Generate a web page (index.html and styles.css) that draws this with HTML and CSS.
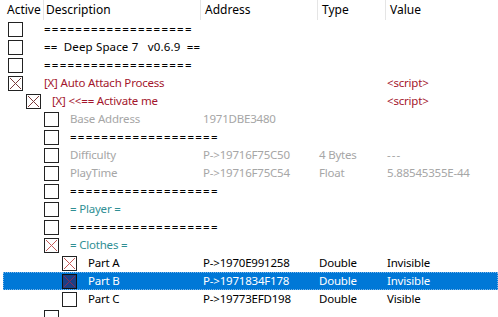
FILE: index.html
```html
<!DOCTYPE html>
<html lang="en">
<head>
    <meta charset="UTF-8">
    <title>Cheat Table</title>
    <link rel="stylesheet" href="styles.css">
</head>
<body>
    <div class="table">
        <div class="header">
            <div class="h-active">Active</div>
            <div class="h-desc">Description</div>
            <div class="h-addr">Address</div>
            <div class="h-type">Type</div>
            <div class="h-value">Value</div>
        </div>

        <div class="row">
            <div class="tree lv1"><span class="cb"></span><span class="desc eq">===================</span></div>
            <div class="addr"></div><div class="type"></div><div class="value"></div>
        </div>
        <div class="row">
            <div class="tree lv1"><span class="cb"></span><span class="desc title">==&nbsp; Deep Space 7&nbsp;&nbsp; v0.6.9&nbsp; ==</span></div>
            <div class="addr"></div><div class="type"></div><div class="value"></div>
        </div>
        <div class="row">
            <div class="tree lv1"><span class="cb"></span><span class="desc eq">===================</span></div>
            <div class="addr"></div><div class="type"></div><div class="value"></div>
        </div>
        <div class="row red">
            <div class="tree lv1"><span class="cb checked"><svg viewBox="0 0 15 15"><path d="M2 2L13 13M13 2L2 13"/></svg></span><span class="desc">[X] Auto Attach Process</span></div>
            <div class="addr"></div><div class="type"></div><div class="value">&lt;script&gt;</div>
        </div>
        <div class="row red">
            <div class="tree lv2"><span class="cb checked"><svg viewBox="0 0 15 15"><path d="M2 2L13 13M13 2L2 13"/></svg></span><span class="desc">[X] &lt;&lt;== Activate me</span></div>
            <div class="addr"></div><div class="type"></div><div class="value">&lt;script&gt;</div>
        </div>
        <div class="row grey">
            <div class="tree lv3"><span class="cb"></span><span class="desc">Base Address</span></div>
            <div class="addr">1971DBE3480</div><div class="type"></div><div class="value"></div>
        </div>
        <div class="row">
            <div class="tree lv3"><span class="cb"></span><span class="desc eq">===================</span></div>
            <div class="addr"></div><div class="type"></div><div class="value"></div>
        </div>
        <div class="row grey">
            <div class="tree lv3"><span class="cb"></span><span class="desc">Difficulty</span></div>
            <div class="addr">P-&gt;19716F75C50</div><div class="type">4 Bytes</div><div class="value dashes">---</div>
        </div>
        <div class="row grey">
            <div class="tree lv3"><span class="cb"></span><span class="desc">PlayTime</span></div>
            <div class="addr">P-&gt;19716F75C54</div><div class="type">Float</div><div class="value">5.88545355E-44</div>
        </div>
        <div class="row">
            <div class="tree lv3"><span class="cb"></span><span class="desc eq">===================</span></div>
            <div class="addr"></div><div class="type"></div><div class="value"></div>
        </div>
        <div class="row teal">
            <div class="tree lv3"><span class="cb"></span><span class="desc">= Player =</span></div>
            <div class="addr"></div><div class="type"></div><div class="value"></div>
        </div>
        <div class="row">
            <div class="tree lv3"><span class="cb"></span><span class="desc eq">===================</span></div>
            <div class="addr"></div><div class="type"></div><div class="value"></div>
        </div>
        <div class="row teal">
            <div class="tree lv3"><span class="cb checked light"><svg viewBox="0 0 15 15"><path d="M2 2L13 13M13 2L2 13"/></svg></span><span class="desc">= Clothes =</span></div>
            <div class="addr"></div><div class="type"></div><div class="value"></div>
        </div>
        <div class="row">
            <div class="tree lv4"><span class="cb checked light"><svg viewBox="0 0 15 15"><path d="M2 2L13 13M13 2L2 13"/></svg></span><span class="desc">Part A</span></div>
            <div class="addr">P-&gt;1970E991258</div><div class="type">Double</div><div class="value">Invisible</div>
        </div>
        <div class="row selected">
            <div class="tree lv4"><span class="cb checked"><svg viewBox="0 0 15 15"><path d="M2 2L13 13M13 2L2 13"/></svg></span><span class="desc">Part B</span></div>
            <div class="addr">P-&gt;1971834F178</div><div class="type">Double</div><div class="value">Invisible</div>
        </div>
        <div class="row">
            <div class="tree lv4"><span class="cb"></span><span class="desc">Part C</span></div>
            <div class="addr">P-&gt;19773EFD198</div><div class="type">Double</div><div class="value">Visible</div>
        </div>
        <div class="row">
            <div class="tree lv3"><span class="cb"></span><span class="desc"></span></div>
            <div class="addr"></div><div class="type"></div><div class="value"></div>
        </div>
    </div>
</body>
</html>
```

FILE: styles.css
```css
body {
    margin: 0;
    background: #fff;
    font-family: 'Noto Sans', 'Open Sans', sans-serif;
    font-size: 12px;
    color: #000;
    overflow: hidden;
}

.table {
    width: 498px;
}

.header {
    display: grid;
    grid-template-columns: 44px 157px 117px 68px 1fr;
    height: 20px;
    align-items: center;
}

.header > div {
    height: 20px;
    line-height: 20px;
    padding-left: 4px;
    border-right: 1px solid #e5e5e5;
    white-space: nowrap;
}

.header .h-active {
    padding-left: 7px;
}

.header .h-desc {
    padding-left: 2px;
}

.header .h-value {
    border-right: none;
}

.row {
    display: grid;
    grid-template-columns: 201px 117px 68px 1fr;
    height: 18px;
    line-height: 18px;
    align-items: center;
    white-space: nowrap;
    font-size: 11.5px;
    letter-spacing: -0.2px;
    position: relative;
    z-index: 0;
}

.tree {
    display: flex;
    align-items: center;
}

.lv1 { padding-left: 8px; }
.lv2 { padding-left: 26px; }
.lv3 { padding-left: 44px; }
.lv4 { padding-left: 62px; }

.cb {
    flex: 0 0 15px;
    width: 15px;
    height: 15px;
    box-sizing: border-box;
    border: 1px solid #222;
    background: #fff;
    margin-right: 11px;
    position: relative;
}

.lv1 .cb {
    margin-right: 21px;
}

.cb svg {
    position: absolute;
    left: -1px;
    top: -1px;
    width: 15px;
    height: 15px;
}

.cb svg path {
    stroke: #7a3a3a;
    stroke-width: 1;
    fill: none;
}

.cb.light svg path {
    stroke: #c45a5a;
}

.eq {
    letter-spacing: 1.25px;
}

.title {
    letter-spacing: 0.15px;
}

.dashes {
    letter-spacing: 1px;
}

.addr {
    padding-left: 2px;
}

.type, .value {
    padding-left: 1px;
}

.red { color: #a3162c; }
.grey { color: #a6a6a6; }
.teal { color: #2f8f94; }

.selected {
    color: #fff;
}

/* selection bar starts a few px in from the left edge */
.selected::before {
    content: "";
    position: absolute;
    left: 3px;
    right: 0;
    top: 0;
    bottom: 0;
    background: #0078d7;
    outline: 1px dotted #7fb6e6;
    outline-offset: -1px;
    z-index: -1;
}

.selected .cb {
    background: #1a3f86;
    border-color: #111;
}

.selected .cb svg path {
    stroke: #8a2a55;
}
```
